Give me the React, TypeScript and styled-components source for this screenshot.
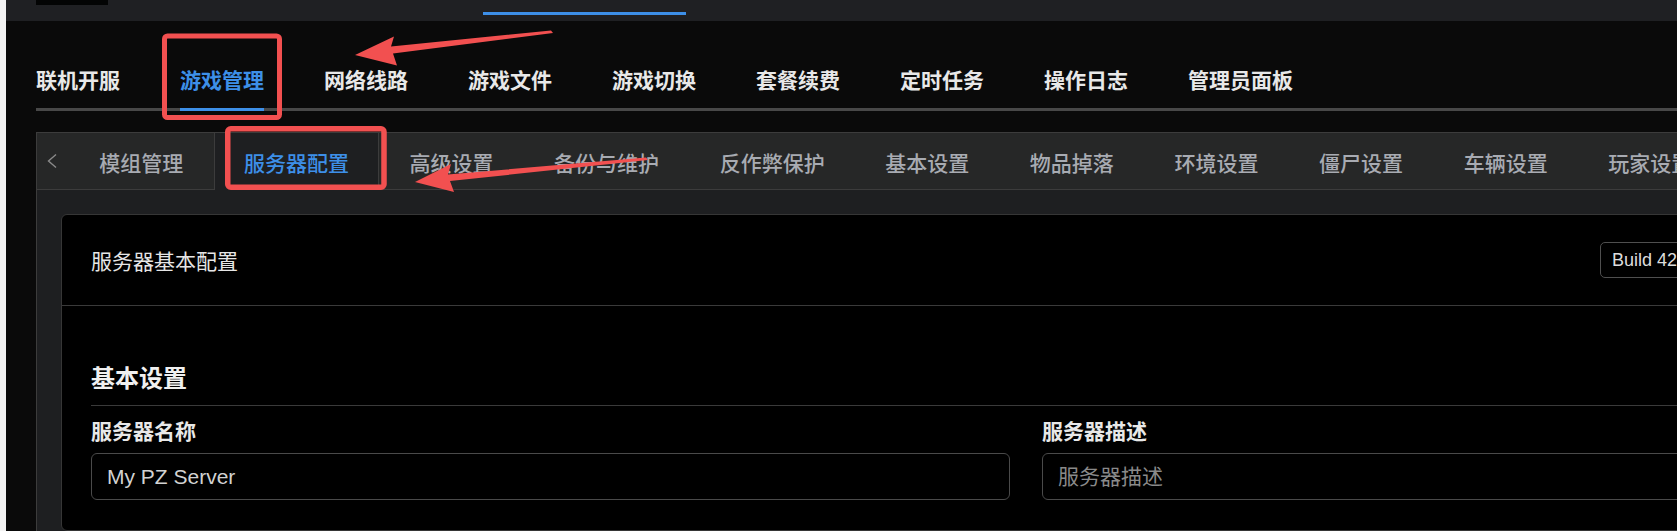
import React from 'react';
import styled, { createGlobalStyle } from 'styled-components';

const GlobalStyle = createGlobalStyle`
  html, body {
    margin: 0;
    padding: 0;
    background: #f3f3f3;
    overflow: hidden;
  }
  body {
    font-family: "Liberation Sans", "Noto Sans CJK SC", sans-serif;
  }
  * {
    box-sizing: border-box;
  }
`;

const Page = styled.div`
  position: relative;
  display: flex;
  width: 2046px;
  height: 531px;
  background: #f3f3f3;
`;

const Edge = styled.div`
  width: 6px;
  flex-shrink: 0;
`;

const Shell = styled.div`
  flex: 1;
  display: flex;
  flex-direction: column;
  background: #0a0a0a;
`;

const TopBar = styled.header`
  height: 21px;
  flex-shrink: 0;
  display: flex;
  align-items: flex-start;
  padding-left: 30px;
  background: #1f2023;
`;

const Logo = styled.div`
  width: 72px;
  height: 5px;
  background: #030404;
`;

const TopTabMark = styled.div`
  width: 203px;
  height: 3px;
  margin-top: 12px;
  margin-left: 375px;
  background: #3d8fe8;
`;

const Main = styled.main`
  flex: 1;
  display: flex;
  flex-direction: column;
  padding: 0 30px;
`;

const NavBar = styled.nav`
  display: flex;
  gap: 60px;
  padding-top: 48px;
  border-bottom: 3px solid #484848;
`;

const NavTab = styled.div<{ $active?: boolean }>`
  font-family: "Noto Sans CJK SC", sans-serif;
  font-size: 21px;
  line-height: 21px;
  font-weight: 700;
  color: ${(p) => (p.$active ? '#3d8fe8' : '#e8e8e8')};
  padding-bottom: 18px;
  margin-bottom: -3px;
  border-bottom: 3px solid ${(p) => (p.$active ? '#3d8fe8' : 'transparent')};
`;

const TabCard = styled.section`
  flex: 1;
  display: flex;
  flex-direction: column;
  margin-top: 21px;
  border: 1px solid #3c3c3c;
  border-bottom: none;
  background: #1e1f21;
`;

const TabStrip = styled.div`
  display: flex;
  height: 57px;
  flex-shrink: 0;
  background: #262727;
  border-bottom: 1px solid #3c3c3c;
`;

const ScrollButton = styled.div`
  width: 32px;
  flex-shrink: 0;
  display: flex;
  align-items: center;
  padding-left: 10px;
  color: #8a8a8a;
`;

const SubTab = styled.div<{ $active?: boolean }>`
  height: 57px;
  flex-shrink: 0;
  display: flex;
  align-items: center;
  padding: 0 29.3px;
  font-family: "Noto Sans CJK SC", sans-serif;
  font-size: 21px;
  font-weight: 500;
  white-space: nowrap;
  color: ${(p) => (p.$active ? '#3d8fe8' : '#a8abb2')};
  background: ${(p) => (p.$active ? '#1e1f21' : 'transparent')};
  border-left: 1px solid ${(p) => (p.$active ? '#3c3c3c' : 'transparent')};
  border-right: 1px solid ${(p) => (p.$active ? '#3c3c3c' : 'transparent')};
`;

const Panel = styled.div`
  flex: 1;
  padding: 24px;
`;

const Card = styled.div`
  height: 100%;
  background: #000000;
  border: 1px solid #363636;
  border-radius: 6px;
`;

const CardHeader = styled.div`
  height: 91px;
  display: flex;
  align-items: center;
  justify-content: space-between;
  padding: 0 29px;
  border-bottom: 1px solid #3a3a3a;
`;

const HeaderTitle = styled.div`
  font-size: 21px;
  color: #e6e6e6;
`;

const VersionSelect = styled.div`
  width: 361px;
  height: 36px;
  display: flex;
  align-items: center;
  justify-content: space-between;
  padding: 0 11px;
  border: 1px solid #4f4f4f;
  border-radius: 5px;
  font-size: 18px;
  color: #dddddd;
`;

const CardBody = styled.div`
  padding: 61px 29px 30px;
`;

const SectionTitle = styled.h3`
  margin: 0;
  font-size: 24px;
  line-height: 24px;
  font-weight: 700;
  color: #f0f0f0;
  padding-bottom: 14px;
  border-bottom: 1px solid #3a3a3a;
`;

const FieldGrid = styled.div`
  display: grid;
  grid-template-columns: 1fr 1fr;
  gap: 32px;
  margin-top: 15px;
`;

const Field = styled.div`
  display: flex;
  flex-direction: column;
`;

const Label = styled.label`
  font-size: 21px;
  line-height: 21px;
  font-weight: 700;
  color: #e8e8e8;
  margin-bottom: 11px;
`;

const TextInput = styled.input`
  height: 47px;
  padding: 0 15px;
  background: #000000;
  border: 1px solid #4a4a4a;
  border-radius: 6px;
  font-family: "Liberation Sans", "Noto Sans CJK SC", sans-serif;
  font-size: 21px;
  color: #d2d2d2;
  outline: none;
  &::placeholder {
    color: #8a8a8a;
  }
`;

const Annotations = styled.svg`
  position: absolute;
  top: 0;
  left: 0;
  pointer-events: none;
`;

const navTabs = ['联机开服', '游戏管理', '网络线路', '游戏文件', '游戏切换', '套餐续费', '定时任务', '操作日志', '管理员面板'];
const subTabs = ['模组管理', '服务器配置', '高级设置', '备份与维护', '反作弊保护', '基本设置', '物品掉落', '环境设置', '僵尸设置', '车辆设置', '玩家设置', '地图设置'];

const RED = '#f25050';

const App = () => {
  return (
    <Page>
      <GlobalStyle />
      <Edge />
      <Shell>
        <TopBar>
          <Logo />
          <TopTabMark />
        </TopBar>
        <Main>
          <NavBar>
            {navTabs.map((t) => (
              <NavTab key={t} $active={t === '游戏管理'}>{t}</NavTab>
            ))}
          </NavBar>
          <TabCard>
            <TabStrip>
              <ScrollButton>
                <svg width="10" height="16" viewBox="0 0 10 16">
                  <polyline points="9,1.5 1.5,8 9,14.5" fill="none" stroke="currentColor" strokeWidth="1.4" />
                </svg>
              </ScrollButton>
              {subTabs.map((t) => (
                <SubTab key={t} $active={t === '服务器配置'}>{t}</SubTab>
              ))}
            </TabStrip>
            <Panel>
              <Card>
                <CardHeader>
                  <HeaderTitle>服务器基本配置</HeaderTitle>
                  <VersionSelect>
                    <span>Build 42</span>
                    <svg width="12" height="12" viewBox="0 0 12 12">
                      <polyline points="2,4 6,8 10,4" fill="none" stroke="#999" strokeWidth="1.4" />
                    </svg>
                  </VersionSelect>
                </CardHeader>
                <CardBody>
                  <SectionTitle>基本设置</SectionTitle>
                  <FieldGrid>
                    <Field>
                      <Label>服务器名称</Label>
                      <TextInput defaultValue="My PZ Server" />
                    </Field>
                    <Field>
                      <Label>服务器描述</Label>
                      <TextInput placeholder="服务器描述" />
                    </Field>
                  </FieldGrid>
                </CardBody>
              </Card>
            </Panel>
          </TabCard>
        </Main>
      </Shell>
      <Annotations width="1677" height="531" viewBox="0 0 1677 531">
        <rect x="164.5" y="36" width="115" height="81.5" rx="3" fill="none" stroke={RED} strokeWidth="5" />
        <rect x="227.75" y="128.75" width="156.25" height="58.5" rx="3" fill="none" stroke={RED} strokeWidth="5.5" />
        <polygon
          points="355,55 394,36.5 391,46.5 551,30.5 553,33 393,53.5 397,65.5"
          fill={RED}
          strokeLinejoin="round"
        />
        <polygon
          points="415,182 451,164 448,174.5 646,157.5 648,160 450,181 454,192"
          fill={RED}
          strokeLinejoin="round"
        />
      </Annotations>
    </Page>
  );
};

export default App;
